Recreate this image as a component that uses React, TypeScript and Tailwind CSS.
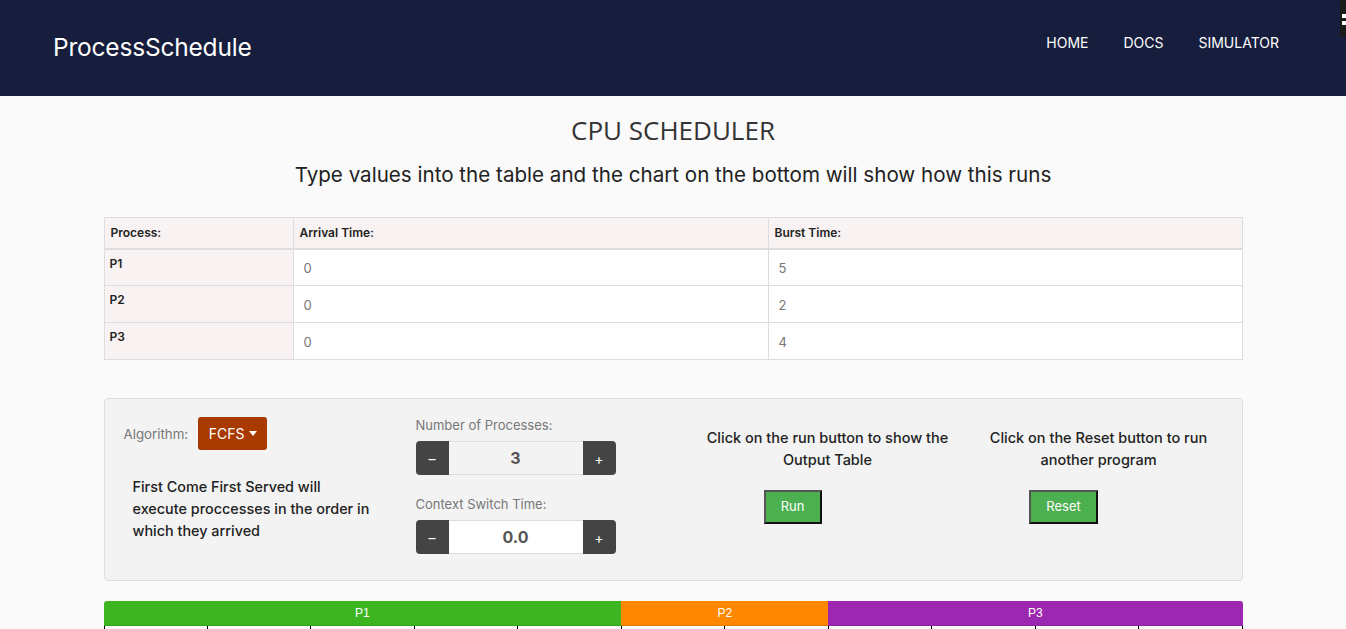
const poppins = { fontFamily: 'Inter, "Noto Sans", sans-serif' };

const rows = [
  { name: 'P1', arrival: '0', burst: '5' },
  { name: 'P2', arrival: '0', burst: '2' },
  { name: 'P3', arrival: '0', burst: '4' },
];

const bars = [
  { name: 'P1', units: 5, color: 'bg-[#3cb521]' },
  { name: 'P2', units: 2, color: 'bg-[#ff8800]' },
  { name: 'P3', units: 4, color: 'bg-[#9c27b0]' },
];

const Stepper = ({ value, light }: { value: string; light?: boolean }) => (
  <div className="flex h-[34px] w-[200px]">
    <button className="w-[33px] rounded-l-[4px] bg-[#444] text-white text-[14px]">–</button>
    <div
      className={`flex-1 flex items-center justify-center border-y border-[#ddd] text-[16px] font-bold text-[#555] ${
        light ? 'bg-white' : 'bg-[#f3f3f3]'
      }`}
    >
      {value}
    </div>
    <button className="w-[33px] rounded-r-[4px] bg-[#444] text-white text-[14px]">+</button>
  </div>
);

const GreenButton = ({ label, w }: { label: string; w: string }) => (
  <button
    className={`${w} h-[34px] bg-[#4caf50] text-white text-[13px] border-2 border-t-[#555] border-l-[#555] border-r-[#111] border-b-[#111]`}
  >
    {label}
  </button>
);

export default function App() {
  return (
    <div className="min-h-[629px] bg-[#fafafa] overflow-hidden" style={poppins}>
      {/* ── Navbar ── */}
      <header className="relative h-[96px] bg-[#171e3d] flex items-center justify-between pl-[53px] pr-[67px]">
        <span className="text-white text-[24.5px] tracking-[-0.2px] -mt-[2px]">ProcessSchedule</span>
        <nav className="flex items-center gap-[35px] text-white text-[14px] -mt-[12px]">
          <span>HOME</span>
          <span>DOCS</span>
          <span>SIMULATOR</span>
        </nav>
        <div className="absolute right-0 top-0 w-[6px] h-[37px] bg-[#1b1b1b] flex flex-col items-end pt-[14px] gap-[3px]">
          <span className="w-[4px] h-[4px] bg-white" />
          <span className="w-[4px] h-[4px] bg-white" />
        </div>
      </header>

      <main className="w-[1139px] mx-auto">
        <h1
          className="mt-[16px] text-center text-[26px] leading-[36px] text-[#333]"
          style={{ fontFamily: '"Open Sans", sans-serif' }}
        >
          CPU SCHEDULER
        </h1>
        <p className="mt-[13px] text-center text-[20.6px] leading-[28px] text-[#222]">
          Type values into the table and the chart on the bottom will show how this runs
        </p>

        {/* Table */}
        <table className="mt-[28px] w-full border-collapse text-[12px]">
          <thead>
            <tr className="h-[31px] bg-[#f8f2f2] border-b-2 border-[#ddd]">
              <th className="w-[189px] border border-[#ddd] text-left font-semibold px-[6px] text-[#222]">Process:</th>
              <th className="w-[475px] border border-[#ddd] text-left font-semibold px-[6px] text-[#222]">Arrival Time:</th>
              <th className="border border-[#ddd] text-left font-semibold px-[6px] text-[#222]">Burst Time:</th>
            </tr>
          </thead>
          <tbody>
            {rows.map((r) => (
              <tr key={r.name} className="h-[37px]">
                <td className="border border-[#ddd] bg-[#f8f2f2] align-top pt-[5px] px-[5px] font-semibold text-[#222]">
                  {r.name}
                </td>
                <td className="border border-[#ddd] bg-white px-[10px] pt-[3px] text-[13px] text-[#777]">{r.arrival}</td>
                <td className="border border-[#ddd] bg-white px-[10px] pt-[3px] text-[13px] text-[#777]">{r.burst}</td>
              </tr>
            ))}
          </tbody>
        </table>

        {/* Controls panel */}
        <section className="mt-[38px] h-[183px] bg-[#f3f3f3] border border-[#ddd] rounded-[4px] grid grid-cols-[311px_284px_256px_286px] items-start">
          <div className="pl-[19px] pt-[18px]">
            <div className="flex items-start gap-[10px]">
              <span className="text-[13.3px] text-[#777] mt-[8px]">Algorithm:</span>
              <button className="h-[33px] w-[69px] rounded-[3px] bg-[#a83a00] text-white text-[14px] flex items-center justify-center gap-[4px]">
                FCFS
                <svg width="8" height="5" viewBox="0 0 8 5">
                  <path d="M0 0h8L4 5z" fill="#fff" />
                </svg>
              </button>
            </div>
            <p className="mt-[26px] ml-[9px] text-[14.4px] leading-[22px] font-medium text-[#222]">
              First Come First Served will
              <br />
              execute proccesses in the order in
              <br />
              which they arrived
            </p>
          </div>

          <div className="pt-[16px]">
            <div className="text-[13px] leading-[20px] text-[#777]">Number of Processes:</div>
            <div className="mt-[6px]">
              <Stepper value="3" />
            </div>
            <div className="mt-[19px] text-[13px] leading-[20px] text-[#777]">Context Switch Time:</div>
            <div className="mt-[6px]">
              <Stepper value="0.0" light />
            </div>
          </div>

          <div className="pt-[28px] flex flex-col items-center">
            <p className="text-center text-[14.5px] leading-[22px] font-medium text-[#222] whitespace-nowrap">
              Click on the run button to show the
              <br />
              Output Table
            </p>
            <div className="mt-[19px] mr-[70px]">
              <GreenButton label="Run" w="w-[58px]" />
            </div>
          </div>

          <div className="pt-[28px] flex flex-col items-center">
            <p className="text-center text-[14.5px] leading-[22px] font-medium text-[#222] whitespace-nowrap">
              Click on the Reset button to run
              <br />
              another program
            </p>
            <div className="mt-[19px] mr-[70px]">
              <GreenButton label="Reset" w="w-[69px]" />
            </div>
          </div>
        </section>

        {/* Gantt chart */}
        <div className="mt-[20px]">
          <div
            className="flex h-[25px] rounded-t-[3px] overflow-hidden text-white text-[12px]"
            style={{ fontFamily: '"Liberation Sans", Arial, sans-serif' }}
          >
            {bars.map((b) => (
              <div
                key={b.name}
                className={`${b.color} flex justify-center pt-[3px] border-b border-black/10`}
                style={{ flexGrow: b.units, flexBasis: 0 }}
              >
                {b.name}
              </div>
            ))}
          </div>
          <div className="grid grid-cols-11 h-[10px] border-r border-black">
            {Array.from({ length: 11 }).map((_, i) => (
              <div key={i} className="border-l border-black" />
            ))}
          </div>
        </div>
      </main>
    </div>
  );
}
